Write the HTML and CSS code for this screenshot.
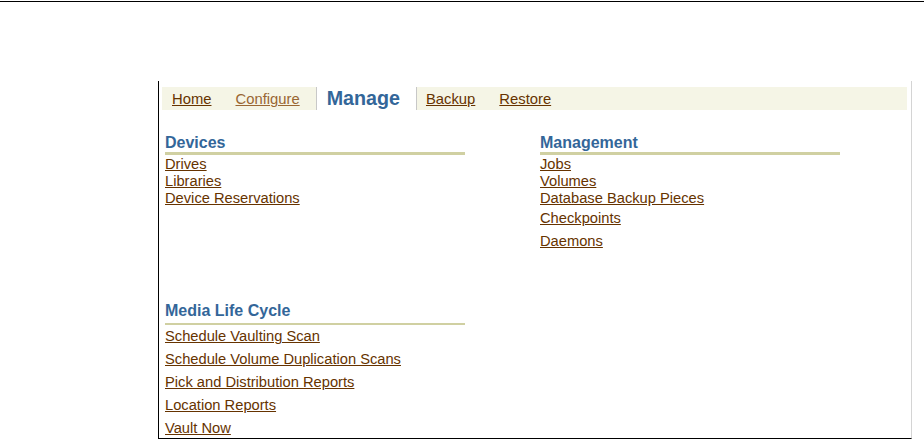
FILE: index.html
```html
<!DOCTYPE html>
<html>
<head>
<meta charset="utf-8">
<title>Manage</title>
<link rel="stylesheet" href="styles.css">
</head>
<body>
<div class="topline"></div>
<div class="frame">
  <nav class="tabbar">
    <a class="tab tab-first" href="#">Home</a>
    <a class="tab tab-visited" href="#">Configure</a>
    <span class="tab tab-current">Manage</span>
    <a class="tab tab-after" href="#">Backup</a>
    <a class="tab" href="#">Restore</a>
  </nav>
  <div class="content">
    <section class="group">
      <h2 class="heading">Devices</h2>
      <ul class="links">
        <li><a href="#">Drives</a></li>
        <li><a href="#">Libraries</a></li>
        <li><a href="#">Device Reservations</a></li>
      </ul>
    </section>
    <section class="group">
      <h2 class="heading">Management</h2>
      <ul class="links">
        <li><a href="#">Jobs</a></li>
        <li><a href="#">Volumes</a></li>
        <li><a href="#">Database Backup Pieces</a></li>
        <li class="gap-s"><a href="#">Checkpoints</a></li>
        <li class="gap-m"><a href="#">Daemons</a></li>
      </ul>
    </section>
    <section class="group group-media">
      <h2 class="heading heading-media">Media Life Cycle</h2>
      <ul class="links links-tall">
        <li><a href="#">Schedule Vaulting Scan</a></li>
        <li><a href="#">Schedule Volume Duplication Scans</a></li>
        <li><a href="#">Pick and Distribution Reports</a></li>
        <li><a href="#">Location Reports</a></li>
        <li><a href="#">Vault Now</a></li>
      </ul>
    </section>
  </div>
</div>
</body>
</html>
```

FILE: styles.css
```css
* { box-sizing: border-box; }

html, body {
  margin: 0;
  padding: 0;
  background: #ffffff;
  font-family: "Liberation Sans", Arial, sans-serif;
  overflow: hidden;
}

.topline {
  margin-top: 1px;
  height: 1px;
  background: #000000;
}

.frame {
  box-sizing: content-box;
  margin: 79px 0 0 158px;
  width: 752px;
  height: 351px;
  padding-top: 6px;
  border-left: 1px solid #000000;
  border-bottom: 1px solid #000000;
  border-right: 1px solid #d4d4d4;
}

.tabbar {
  display: flex;
  align-items: stretch;
  height: 23px;
  margin: 0 4px 0 3px;
  background: #f5f5e6;
}

.tab {
  font-size: 14.8px;
  line-height: 22px;
  padding: 1px 12px 0;
  color: #663300;
  text-decoration: underline;
}

.tab-first { padding-left: 10px; }
.tab-visited { color: #996633; padding-right: 16px; }

.tab-current {
  font-size: 19.7px;
  line-height: 23px;
  font-weight: bold;
  color: #336699;
  text-decoration: none;
  background: #ffffff;
  padding: 0 16px 0 10px;
  border-left: 1px solid #c8c8c8;
  border-right: 1px solid #c8c8c8;
}

.tab-after { padding-left: 9px; }

.content {
  display: grid;
  grid-template-columns: 300px 300px;
  column-gap: 75px;
  align-items: start;
  padding: 23px 0 0 6px;
}

.group-media {
  grid-column: 1;
  margin-top: 51px;
}

.heading {
  margin: 0;
  font-size: 16px;
  line-height: 19px;
  font-weight: bold;
  color: #336699;
  border-bottom: 3px solid #d0d0a2;
}

.heading-media {
  padding-bottom: 3px;
  border-bottom-width: 2px;
}

.links {
  list-style: none;
  margin: 0;
  padding: 1px 0 0;
}

.links li {
  font-size: 14.7px;
  line-height: 17px;
}

.links-tall { padding-top: 0; }
.links-tall li { line-height: 23px; }

.links a {
  color: #663300;
  text-decoration: underline;
}

.gap-s { margin-top: 3px; }
.gap-m { margin-top: 6px; }
```
